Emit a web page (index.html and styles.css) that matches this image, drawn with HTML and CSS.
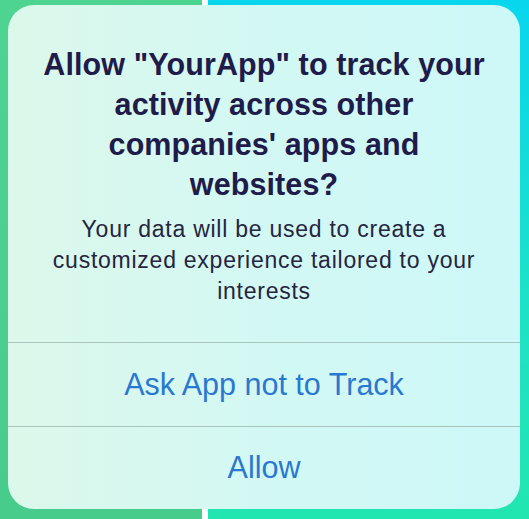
FILE: index.html
```html
<!DOCTYPE html>
<html lang="en">
<head>
<meta charset="utf-8">
<title>Tracking permission</title>
<link rel="stylesheet" href="styles.css">
</head>
<body>
<div class="stage">
  <div class="alert">
    <div class="alert-content">
      <h1 class="alert-title">Allow "YourApp" to track your activity across other companies' apps and websites?</h1>
      <p class="alert-message">Your data will be used to create a customized experience tailored to your interests</p>
    </div>
    <div class="alert-actions">
      <button class="alert-button">Ask App not to Track</button>
      <button class="alert-button">Allow</button>
    </div>
  </div>
</div>
</body>
</html>
```

FILE: styles.css
```css
html, body {
  margin: 0;
  padding: 0;
}
body {
  width: 529px;
  height: 519px;
  overflow: hidden;
  background:
    linear-gradient(to right, transparent 0 202px, #ffffff 202px 208px, transparent 208px),
    linear-gradient(to bottom, #4ed491, #48cc8c) 0 0 / 202px 100% no-repeat,
    linear-gradient(to bottom, #08d6ee, #1ee2c6 60%, #22e6b0) 208px 0 / 321px 100% no-repeat,
    #ffffff;
  font-family: "Liberation Sans", Arial, sans-serif;
}
.stage {
  padding: 5px 9px 0 8px;
}
.alert {
  width: 512px;
  height: 504px;
  border-radius: 26px;
  background: linear-gradient(to right, #dcf8eb, #d2f8f4 55%, #cdf8f8);
  display: flex;
  flex-direction: column;
  overflow: hidden;
}
.alert-content {
  padding: 39px 0 0;
  height: 337px;
  box-sizing: border-box;
  text-align: center;
}
.alert-title {
  margin: 0 30px;
  font-size: 30.5px;
  line-height: 40px;
  font-weight: 700;
  color: #1f1b4a;
  letter-spacing: 0.1px;
}
.alert-message {
  margin: 10px 36px 0;
  font-size: 23px;
  line-height: 31px;
  font-weight: 400;
  color: #26243f;
  letter-spacing: 0.75px;
}
.alert-actions {
  display: flex;
  flex-direction: column;
  flex: 1;
}
.alert-button {
  flex: 1;
  border: 0;
  border-top: 1px solid #a9c4bb;
  background: transparent;
  font-family: "Liberation Sans", Arial, sans-serif;
  font-size: 30.5px;
  color: #2a78d0;
  padding: 0;
  text-align: center;
}
```
